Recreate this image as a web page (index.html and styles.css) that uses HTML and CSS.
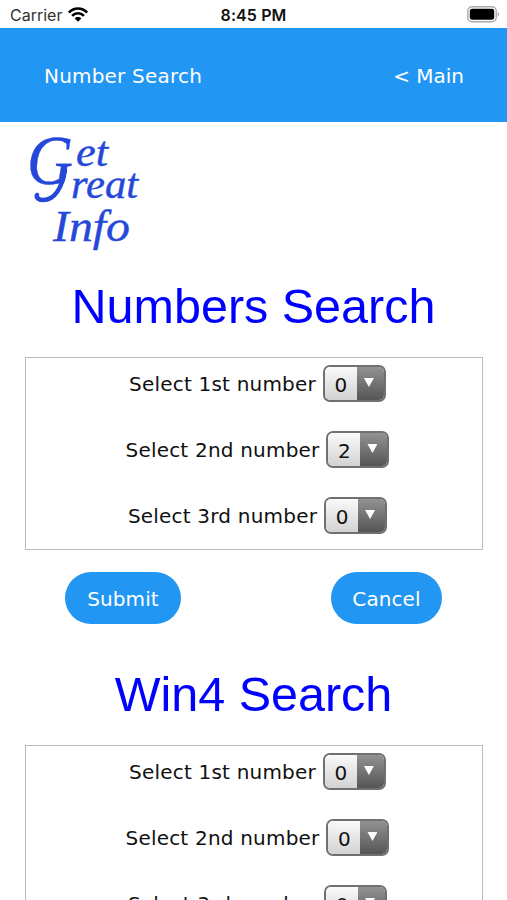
FILE: index.html
```html
<!DOCTYPE html>
<html lang="en">
<head>
  <meta charset="UTF-8">
  <meta name="viewport" content="width=device-width, initial-scale=1">
  <title>Number Search</title>
  <link rel="stylesheet" href="styles.css">
</head>
<body>
  <div class="status-bar">
    <div class="carrier">
      <span class="carrier-name">Carrier</span>
      <svg class="wifi" width="20" height="15" viewBox="0 0 20 15">
        <g fill="none" stroke="#000" stroke-width="2.6">
          <path d="M0.9 5.5 C6 0.2 14 0.2 19.1 5.5"/>
          <path d="M4.1 8.9 C7.4 5.4 12.6 5.4 15.9 8.9"/>
        </g>
        <path d="M6.7 11.5 C8.6 9.6 11.4 9.6 13.3 11.5 L10 14.8 Z"/>
      </svg>
    </div>
    <div class="time">8:45 PM</div>
    <svg class="battery" width="33" height="17" viewBox="0 0 33 17">
      <rect x="0.8" y="0.8" width="28.4" height="15" rx="4.2" fill="#fff" stroke="#aaa" stroke-width="1.4"/>
      <rect x="2.8" y="2.8" width="24.4" height="11" rx="2.2"/>
      <path d="M30.6 6 C32.6 7 32.6 9.6 30.6 10.6 Z" fill="#aaa"/>
    </svg>
  </div>

  <div class="header">
    <span class="title">Number Search</span>
    <a class="main-link">&lt; Main</a>
  </div>

  <svg class="logo" width="120" height="124" viewBox="0 0 120 124">
    <text class="logo-big" x="-1" y="50" textLength="46" lengthAdjust="spacingAndGlyphs">G</text>
    <path class="swash" d="M37 36 C34 53 27 66 15 66 C11 66 8 64 9 61"/>
    <text x="48" y="32" textLength="32" lengthAdjust="spacingAndGlyphs">et</text>
    <text x="43" y="64" textLength="67" lengthAdjust="spacingAndGlyphs">reat</text>
    <text class="logo-info" x="25" y="107" textLength="77" lengthAdjust="spacingAndGlyphs">Info</text>
  </svg>

  <h1>Numbers Search</h1>
  <div class="search-box">
    <div class="row"><label>Select 1st number</label><div class="select"><span class="value">0</span><span class="arrow"></span></div></div>
    <div class="row"><label>Select 2nd number</label><div class="select"><span class="value">2</span><span class="arrow"></span></div></div>
    <div class="row"><label>Select 3rd number</label><div class="select"><span class="value">0</span><span class="arrow"></span></div></div>
  </div>
  <div class="buttons">
    <button class="submit">Submit</button>
    <button class="cancel">Cancel</button>
  </div>

  <h1>Win4 Search</h1>
  <div class="search-box">
    <div class="row"><label>Select 1st number</label><div class="select"><span class="value">0</span><span class="arrow"></span></div></div>
    <div class="row"><label>Select 2nd number</label><div class="select"><span class="value">0</span><span class="arrow"></span></div></div>
    <div class="row"><label>Select 3rd number</label><div class="select"><span class="value">0</span><span class="arrow"></span></div></div>
  </div>
</body>
</html>
```

FILE: styles.css
```css
* {
  box-sizing: border-box;
}
body {
  margin: 0;
  height: 900px;
  overflow: hidden;
  background-color: #fff;
  color: #111;
  font-family: Verdana, 'DejaVu Sans', sans-serif;
  font-size: 20px;
}
.status-bar {
  display: grid;
  grid-template-columns: 1fr auto 1fr;
  align-items: center;
  height: 28px;
  padding: 1px 7px 0 10px;
  font-family: Inter, sans-serif;
  font-size: 16px;
}
.carrier {
  display: flex;
  align-items: center;
  gap: 6px;
  color: #333;
}
.time {
  margin-right: 3px;
  color: #111;
  font-weight: 600;
  letter-spacing: 0.1px;
}
.battery {
  justify-self: end;
}
.header {
  display: flex;
  justify-content: space-between;
  align-items: center;
  height: 94px;
  padding: 2px 43px 0 44px;
  background-color: #2196f3;
  color: #fff;
}
.title {
  letter-spacing: 0.2px;
}
.logo {
  display: block;
  margin: 12px 0 0 28px;
  overflow: visible;
  fill: #2648d8;
  stroke: #2648d8;
  stroke-width: 0.4;
  font-family: 'Liberation Serif', serif;
  font-style: italic;
  font-size: 42px;
}
.logo-big {
  font-size: 70px;
}
.logo-info {
  font-size: 45px;
}
.swash {
  fill: none;
  stroke-width: 4.5;
  stroke-linecap: round;
}
h1 {
  margin: 20px 0 22px;
  height: 57px;
  line-height: 57px;
  color: #0000ff;
  font-family: 'Liberation Sans', Arial, sans-serif;
  font-size: 48.5px;
  font-weight: normal;
  text-align: center;
}
.search-box {
  height: 193px;
  margin: 0 24px 0 25px;
  padding: 7px 0 0 7px;
  border: 1px solid #bbb;
}
.row {
  display: flex;
  justify-content: center;
  align-items: center;
  gap: 7px;
  height: 37px;
  margin-bottom: 29px;
}
.row label {
  letter-spacing: 0.2px;
}
.select {
  display: flex;
  width: 63px;
  height: 37px;
  border: 2px solid #707070;
  border-radius: 7px;
  overflow: hidden;
}
.value {
  display: flex;
  justify-content: center;
  align-items: center;
  width: 32px;
  padding-top: 2px;
  background: linear-gradient(#fafafa, #d2d2d2);
}
.arrow {
  flex: 1;
  background: linear-gradient(#929292, #555);
}
.arrow::before {
  content: '';
  display: block;
  margin: 11px 0 0 7px;
  width: 10px;
  height: 9px;
  background-color: #fff;
  clip-path: polygon(0 0, 100% 0, 50% 100%);
}
.buttons {
  display: flex;
  justify-content: space-between;
  margin: 22px 65px 0;
}
button {
  height: 52px;
  padding: 2px 0 0;
  border: none;
  border-radius: 26px;
  background-color: #2196f3;
  color: #fff;
  font-family: inherit;
  font-size: 20px;
  letter-spacing: 0.1px;
}
.submit {
  width: 116px;
}
.cancel {
  width: 111px;
}
.buttons + h1 {
  margin-top: 42px;
}
```
